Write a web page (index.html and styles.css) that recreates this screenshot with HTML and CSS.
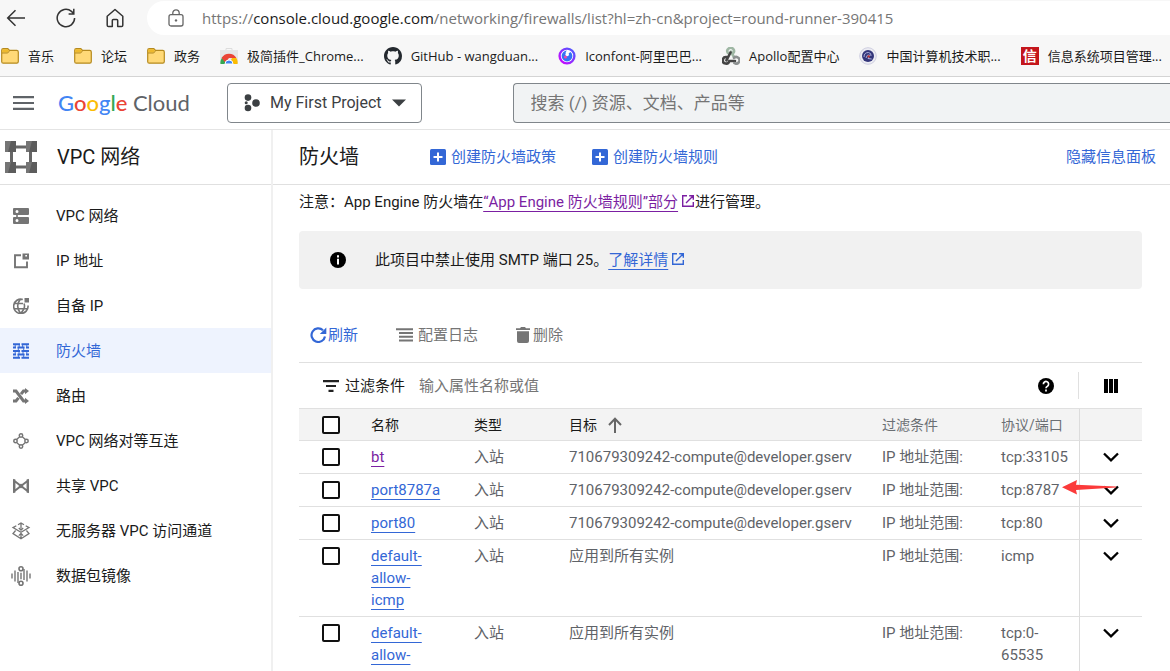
FILE: index.html
```html
<!DOCTYPE html>
<html lang="zh-CN">
<head>
<meta charset="utf-8">
<title>防火墙 – VPC 网络 – Google Cloud</title>
<link rel="stylesheet" href="styles.css">
</head>
<body>
<svg class="defs" aria-hidden="true">
  <symbol id="folder" viewBox="0 0 18 18">
    <path d="M.7 3.2Q.7 1.7 2.2 1.7H6.8L8.6 3.4H15.8Q17.3 3.4 17.3 4.9V14.6Q17.3 16.2 15.8 16.2H2.2Q.7 16.2.7 14.6Z" fill="#ffd977" stroke="#b58a1f" stroke-width="1.2"/>
    <path d="M1.2 3Q1.2 2.2 2.2 2.2H6.6L8 3.6 6.6 5.6H1.2Z" fill="#edb92e"/>
    <path d="M1 6H6.7L8.7 3.6" fill="none" stroke="#b58a1f"/>
  </symbol>
  <symbol id="external" viewBox="0 0 14 14">
    <path d="M6 1.7H1.7V12.3H12.3V8M8.2 1.7H12.3V5.8M12 2L5 9" fill="none" stroke="currentColor" stroke-width="1.4"/>
  </symbol>
  <symbol id="plus" viewBox="0 0 16 16">
    <rect width="16" height="16" rx="1.5" fill="currentColor"/>
    <path d="M8 3.5V12.5M3.5 8H12.5" stroke="#fff" stroke-width="2"/>
  </symbol>
  <symbol id="chevron" viewBox="0 0 16 10">
    <path d="M1 1.5L8 8.3 15 1.5" fill="none" stroke="#000" stroke-width="2.3"/>
  </symbol>
</svg>

<div class="browser">
  <div class="address-row">
    <button class="tool" aria-label="返回"><svg width="20" height="18" viewBox="0 0 20 18"><path d="M19 9H2M9.5 1.2L1.7 9 9.5 16.8" fill="none" stroke="#333" stroke-width="1.5"/></svg></button>
    <button class="tool" aria-label="刷新页面"><svg width="20" height="20" viewBox="0 0 20 20"><path d="M18.6 10A8.7 8.7 0 1 1 15.5 3.4L17.6 5.6M17.8 .8V6H12.6" fill="none" stroke="#333" stroke-width="1.5"/></svg></button>
    <button class="tool" aria-label="主页"><svg width="18" height="20" viewBox="0 0 18 20"><path d="M1.2 8.3L9 1.5 16.8 8.3V17.2Q16.8 18.5 15.5 18.5H11.7V12.5Q11.7 11.5 10.7 11.5H7.3Q6.3 11.5 6.3 12.5V18.5H2.5Q1.2 18.5 1.2 17.2Z" fill="none" stroke="#333" stroke-width="1.5" stroke-linejoin="round"/></svg></button>
    <div class="url">
      <svg width="16" height="18" viewBox="0 0 16 18"><rect x="1" y="5.7" width="14" height="11.3" rx="2" fill="none" stroke="#666" stroke-width="1.3"/><path d="M4.8 5.7V4A3.2 3.2 0 0 1 11.2 4V5.7" fill="none" stroke="#666" stroke-width="1.3"/><circle cx="8" cy="11.4" r="1.2" fill="#666"/></svg>
      <span>https://<b>console.cloud.google.com</b>/networking/firewalls/list?hl=zh-cn&amp;project=round-runner-390415</span>
    </div>
  </div>
  <nav class="bookmarks" aria-label="书签">
    <a href="#"><svg><use href="#folder"/></svg>音乐</a>
    <a href="#"><svg><use href="#folder"/></svg>论坛</a>
    <a href="#"><svg><use href="#folder"/></svg>政务</a>
    <a href="#"><svg viewBox="0 0 18 18"><path d="M0 3H18V17H0Z" fill="#e6e6e6"/><path d="M6 3V1.5H12V3" fill="none" stroke="#ddd"/><path d="M.5 17A8.5 8.5 0 0 1 4 8.9L9 17Z" fill="#34a853"/><path d="M1.6 11A8.5 8.5 0 0 1 16.4 11H9L5.2 15.5Z" fill="#ea4335"/><path d="M16.4 11A8.5 8.5 0 0 1 17.5 17H9L12 11Z" fill="#fbbc04"/><path d="M5 17A4 4 0 0 1 13 17Z" fill="#4285f4" stroke="#fff"/></svg>极简插件_Chrome...</a>
    <a href="#"><svg viewBox="0 0 16 16"><path fill="#24292f" d="M8 0C3.58 0 0 3.58 0 8c0 3.54 2.29 6.53 5.47 7.59.4.07.55-.17.55-.38 0-.19-.01-.82-.01-1.49-2.01.37-2.53-.49-2.69-.94-.09-.23-.48-.94-.82-1.13-.28-.15-.68-.52-.01-.53.63-.01 1.08.58 1.23.82.72 1.21 1.87.87 2.33.66.07-.52.28-.87.51-1.07-1.78-.2-3.64-.89-3.64-3.95 0-.87.31-1.59.82-2.15-.08-.2-.36-1.02.08-2.12 0 0 .67-.21 2.2.82.64-.18 1.32-.27 2-.27s1.36.09 2 .27c1.53-1.04 2.2-.82 2.2-.82.44 1.1.16 1.92.08 2.12.51.56.82 1.27.82 2.15 0 3.07-1.87 3.75-3.65 3.95.29.25.54.73.54 1.48 0 1.07-.01 1.93-.01 2.2 0 .21.15.46.55.38A8.01 8.01 0 0 0 16 8c0-4.42-3.58-8-8-8z"/></svg>GitHub - wangduan...</a>
    <a href="#"><svg viewBox="0 0 18 18"><defs><linearGradient id="ring" x1="0" y1="1" x2="1" y2="0"><stop offset="0" stop-color="#d400ff"/><stop offset="1" stop-color="#4560ff"/></linearGradient></defs><circle cx="9" cy="9" r="7.4" fill="#fff" stroke="url(#ring)" stroke-width="2.4"/><path d="M9 3.6A5.4 5.4 0 1 0 14.4 9 5.4 5.4 0 0 0 12.5 5Q9.5 8 7.5 6Q8 4.5 9 3.6Z" fill="#3474f4"/><circle cx="9.2" cy="7.4" r="1.8" fill="#fff"/><circle cx="7.5" cy="10" r="1.5" fill="#f444a8"/></svg>Iconfont-阿里巴巴...</a>
    <a href="#"><svg viewBox="0 0 18 18"><g fill="none" stroke-width="2.6" stroke-linecap="round"><path d="M5.8 5.8A3.3 3.3 0 1 1 11 6.4M8.8 4.5L12 10" stroke="#9fb7a4"/><path d="M4.3 10A3.3 3.3 0 1 0 7.3 14H13M8.5 5.5L4.4 13.3" stroke="#444"/><path d="M12 10.8A3.3 3.3 0 1 1 12.3 16" stroke="#8c9090"/></g></svg>Apollo配置中心</a>
    <a href="#"><svg viewBox="0 0 18 18"><circle cx="9" cy="9" r="8.3" fill="#ececf3" stroke="#cfcfe0"/><circle cx="9" cy="9" r="6" fill="#33367a"/><path d="M5 10Q5 5.5 9.5 5.5 12.5 6 12 9M7 11Q8 7 10.5 8L9 11.5 12.7 12" fill="none" stroke="#aeb0dc"/><circle cx="9.7" cy="9.4" r="1.2" fill="#b33"/></svg>中国计算机技术职...</a>
    <a href="#"><span class="seal">信</span>信息系统项目管理...</a>
  </nav>
</div>

<header class="topbar">
  <button class="menu" aria-label="导航菜单"><svg width="21" height="14" viewBox="0 0 21 14"><path d="M0 1.2H21M0 7H21M0 12.8H21" stroke="#5f6368" stroke-width="2.2"/></svg></button>
  <a class="logo" href="#"><span class="g-blue">G</span><span class="g-red">o</span><span class="g-yellow">o</span><span class="g-blue">g</span><span class="g-green">l</span><span class="g-red">e</span> <span class="cloud">Cloud</span></a>
  <button class="project"><svg width="16" height="18" viewBox="0 0 16 18"><g fill="#3c4043"><circle cx="4" cy="3.6" r="3.3"/><circle cx="4" cy="14" r="3.3"/><circle cx="12" cy="9" r="3.8"/><circle cx="2.2" cy="8.8" r="1.5"/></g></svg><span>My First Project</span><svg width="14" height="8" viewBox="0 0 14 8"><path d="M0 .5H14L7 7.5Z" fill="#3c4043"/></svg></button>
  <input class="search" type="search" aria-label="搜索" placeholder="搜索 (/) 资源、文档、产品等">
</header>

<div class="shell">
  <aside class="sidebar">
    <div class="product">
      <svg width="32" height="32" viewBox="0 0 32 32"><path d="M10 6H22M10 26H22M6.5 10V22M25.5 10V22" stroke="#666" stroke-width="3"/><g fill="#757575"><path d="M0 0H11V11H0ZM21 0H32V11H21ZM0 21H11V32H0ZM21 21H32V32H21Z"/></g><g fill="#5c5c5c"><path d="M6 0H11V11H3ZM27 0H32V11H24ZM6 21H11V32H3ZM27 21H32V32H24Z"/></g></svg>
      <span>VPC 网络</span>
    </div>
    <nav class="side-nav" aria-label="VPC 网络">
      <a href="#"><svg viewBox="0 0 16 16"><path fill="currentColor" fill-rule="evenodd" d="M1 0H15Q16 0 16 1V6Q16 7 15 7H1Q0 7 0 6V1Q0 0 1 0ZM1 9H15Q16 9 16 10V15Q16 16 15 16H1Q0 16 0 15V10Q0 9 1 9ZM4 2A1.5 1.5 0 1 0 4 5 1.5 1.5 0 1 0 4 2ZM4 11A1.5 1.5 0 1 0 4 14 1.5 1.5 0 1 0 4 11Z"/><path d="M3.2 5V11H4.8V5Z" fill="currentColor"/></svg>VPC 网络</a>
      <a href="#"><svg viewBox="0 0 16 16"><path d="M8 2.2H2V14.2H14V8.5" fill="none" stroke="currentColor" stroke-width="1.9"/><path fill="currentColor" fill-rule="evenodd" d="M9.5.5H16V6.5H9.5ZM12.3 2V3.4H14V2Z"/></svg>IP 地址</a>
      <a href="#"><svg viewBox="0 0 16 16"><g fill="none" stroke="currentColor" stroke-width="1.6"><path d="M9.8 1.4A7.2 7.2 0 1 0 15 7.5M7.5 1Q1.8 8 7.5 15.4 13 10 11 5.5M1.3 5.5H10M1.3 10.8H14.2"/></g><path d="M11.5 0H16V4.5H11.5Z" fill="currentColor"/></svg>自备 IP</a>
      <a href="#" class="active" aria-current="page"><svg viewBox="0 0 16 16"><path fill="none" stroke="currentColor" stroke-width="2" d="M0 1.2H7M8.5 1.2H16M0 4.6H3M4.5 4.6H11.5M13 4.6H16M0 8H7M8.5 8H16M0 11.4H3M4.5 11.4H11.5M13 11.4H16M0 14.8H7M8.5 14.8H16"/><path d="M2.2 1V5M6.2 1V5M9.6 1V5M13.8 1V5M2.2 8V11M6 8V11M10 8V11M13.8 8V11M5.3 4V8M10.7 4V8M5.3 11V15M10.7 11V15" stroke="currentColor" stroke-width=".9"/></svg>防火墙</a>
      <a href="#"><svg viewBox="0 0 16 16"><path d="M0 3H3L10.5 13H13M0 13H3L5.5 9.8M8 6.2L10.5 3H13" fill="none" stroke="currentColor" stroke-width="3"/><path d="M12 0L16 3 12 6.2ZM12 9.8L16 13 12 16Z" fill="currentColor"/></svg>路由</a>
      <a href="#"><svg viewBox="0 0 16 16"><path d="M6.7 3.8L3.6 6.6M9.3 3.8L12.4 6.6M3.6 9.4L6.7 12.2M12.4 9.4L9.3 12.2" fill="none" stroke="currentColor" stroke-width="1.3"/><g fill="none" stroke="currentColor" stroke-width="1.5"><circle cx="8" cy="2.5" r="1.7"/><circle cx="8" cy="13.5" r="1.7"/><circle cx="2.5" cy="8" r="1.7"/><circle cx="13.5" cy="8" r="1.7"/></g></svg>VPC 网络对等互连</a>
      <a href="#"><svg viewBox="0 0 16 16"><path d="M1.2 2.8L14.8 13.2V2.8L1.2 13.2Z" fill="none" stroke="currentColor" stroke-width="2"/><path d="M0 1.2H2.3V14.8H0ZM13.7 1.2H16V14.8H13.7ZM5.5 8L8 5.6 10.5 8 8 10.4Z" fill="currentColor"/></svg>共享 VPC</a>
      <a href="#"><svg class="wide" viewBox="0 0 20 20"><path d="M7 3.7L10 2 13 3.7M5.3 4.7L2 6.6 10 11.2 18 6.6 14.7 4.7M4.6 9.5L2 12.5 10 17.8 18 12.5 15.4 9.5M10 2.5V7.5M7.8 7L10 9 12.2 7M10 17.5V12.5M7.8 14.6L10 12.4 12.2 14.6" fill="none" stroke="currentColor" stroke-width="1.3"/></svg>无服务器 VPC 访问通道</a>
      <a href="#"><svg class="wide" viewBox="0 0 20 20"><path d="M1 7.5V12.5M4 4.5V15.5M7 6V17M10 6.8V13.2M13 3V14M16 4.5V15.5M19 7.5V12.5" stroke="currentColor" stroke-width="1.4"/><g fill="none" stroke="currentColor" stroke-width="1.6"><circle cx="10" cy="2.8" r="2"/><circle cx="10" cy="17.2" r="2"/></g></svg>数据包镜像</a>
    </nav>
  </aside>

  <main class="main">
    <div class="page-head">
      <h1>防火墙</h1>
      <button class="link-btn"><svg width="16" height="16"><use href="#plus"/></svg>创建防火墙政策</button>
      <button class="link-btn"><svg width="16" height="16"><use href="#plus"/></svg>创建防火墙规则</button>
      <button class="link-btn panel-toggle">隐藏信息面板</button>
    </div>
    <div class="content">
      <p class="note">注意：App Engine 防火墙在<a class="visited" href="#">“App Engine 防火墙规则”部分</a><svg class="ext visited" width="14" height="14"><use href="#external"/></svg>进行管理。</p>
      <div class="banner">
        <svg width="16" height="16" viewBox="0 0 16 16"><circle cx="8" cy="8" r="8"/><path d="M8 3.3V5.4M8 6.8V12.5" stroke="#fff" stroke-width="2"/></svg>
        <p>此项目中禁止使用 SMTP 端口 25。<a href="#">了解详情</a><svg class="ext" width="14" height="14"><use href="#external"/></svg></p>
      </div>
      <div class="actions">
        <button class="refresh"><svg width="17" height="16" viewBox="0 0 17 16"><path d="M15 9.5A6.8 6.8 0 1 1 13 3.2" fill="none" stroke="currentColor" stroke-width="2.2"/><path d="M16.3.5V7H9.8Z" fill="currentColor"/></svg>刷新</button>
        <button class="logs"><svg width="17" height="14" viewBox="0 0 17 14"><path d="M0 1.2H17M3 5H17M3 8.8H17M3 12.6H17" stroke="currentColor" stroke-width="2"/></svg>配置日志</button>
        <button class="delete"><svg width="14" height="16" viewBox="0 0 14 16"><path d="M0 1.2H4L5 0H9L10 1.2H14V3H0ZM1 4.2H13V14Q13 16 11 16H3Q1 16 1 14Z" fill="currentColor"/></svg>删除</button>
      </div>
      <div class="filter">
        <svg width="16" height="12" viewBox="0 0 16 12"><path d="M0 1.2H16M3 6H13M5.5 10.8H10.5" stroke="#222" stroke-width="2.2"/></svg>
        <label for="filter">过滤条件</label>
        <input id="filter" type="text" placeholder="输入属性名称或值">
        <button class="help" aria-label="帮助"><svg width="16" height="16" viewBox="0 0 16 16"><circle cx="8" cy="8" r="8"/><path d="M5.4 6.3A2.6 2.6 0 1 1 9.5 8.2Q8 9 8 10.3M8 11.6V13.4" fill="none" stroke="#fff" stroke-width="1.7"/></svg></button>
        <button class="columns" aria-label="列显示选项"><svg width="14" height="14" viewBox="0 0 14 14"><path d="M0 0H4V14H0ZM5 0H9V14H5ZM10 0H14V14H10Z"/></svg></button>
      </div>
      <table class="rules">
        <colgroup><col class="c-check"><col class="c-name"><col class="c-type"><col><col class="c-filter"><col class="c-port"><col class="c-more"></colgroup>
        <thead>
          <tr><th class="check"><input type="checkbox" aria-label="全选"></th><th>名称</th><th>类型</th><th>目标<svg class="sort" width="14" height="16" viewBox="0 0 14 16"><path d="M7 16V1.8M1 8L7 1.8 13 8" fill="none" stroke="#666" stroke-width="2"/></svg></th><th class="soft">过滤条件</th><th class="soft">协议/端口</th><th class="more"></th></tr>
        </thead>
        <tbody>
          <tr><td class="check"><input type="checkbox" aria-label="bt"></td><td><a class="visited" href="#">bt</a></td><td>入站</td><td class="target">710679309242-compute@developer.gserv</td><td>IP 地址范围:</td><td>tcp:33105</td><td class="more"><button aria-label="展开 bt"><svg width="16" height="10"><use href="#chevron"/></svg></button></td></tr>
          <tr><td class="check"><input type="checkbox" aria-label="port8787a"></td><td><a href="#">port8787a</a></td><td>入站</td><td class="target">710679309242-compute@developer.gserv</td><td>IP 地址范围:</td><td>tcp:8787</td><td class="more"><button aria-label="展开 port8787a"><svg width="16" height="10"><use href="#chevron"/></svg></button><svg class="pointer" width="54" height="15" viewBox="0 0 54 15"><path d="M0 7.2L15 0 14 4.8 54 6.6V7.6L14 10 15 14.5Z" fill="#fb3a3a"/></svg></td></tr>
          <tr><td class="check"><input type="checkbox" aria-label="port80"></td><td><a href="#">port80</a></td><td>入站</td><td class="target">710679309242-compute@developer.gserv</td><td>IP 地址范围:</td><td>tcp:80</td><td class="more"><button aria-label="展开 port80"><svg width="16" height="10"><use href="#chevron"/></svg></button></td></tr>
          <tr><td class="check"><input type="checkbox" aria-label="default-allow-icmp"></td><td><a href="#">default-<br>allow-<br>icmp</a></td><td>入站</td><td>应用到所有实例</td><td>IP 地址范围:</td><td>icmp</td><td class="more"><button aria-label="展开 default-allow-icmp"><svg width="16" height="10"><use href="#chevron"/></svg></button></td></tr>
          <tr><td class="check"><input type="checkbox" aria-label="default-allow-"></td><td><a href="#">default-<br>allow-</a></td><td>入站</td><td>应用到所有实例</td><td>IP 地址范围:</td><td>tcp:0-<br>65535</td><td class="more"><button aria-label="展开 default-allow-"><svg width="16" height="10"><use href="#chevron"/></svg></button></td></tr>
        </tbody>
      </table>
    </div>
  </main>
</div>
</body>
</html>
```
FILE: styles.css
```css
* { box-sizing: border-box; }

body {
  margin: 0;
  height: 100vh;
  overflow: hidden;
  display: flex;
  flex-direction: column;
  background: #fff;
  color: #1a1a1a;
  font: 15px/22px Roboto, "Noto Sans CJK SC", sans-serif;
}

button, input { font: inherit; color: inherit; margin: 0; }
button { padding: 0; border: 0; background: none; display: flex; align-items: center; }
a { color: #3367d6; text-decoration: none; }
p, h1 { margin: 0; }
svg { flex: none; }
.defs { position: absolute; width: 0; height: 0; }

/* browser chrome */
.browser {
  flex: none;
  background: #f7f7f7;
  border-bottom: 1px solid #d4d4d4;
  font-family: "Open Sans", "Noto Sans CJK SC", sans-serif;
}
.address-row { display: flex; align-items: center; height: 36px; padding-left: 6px; }
.tool { width: 50px; }
.tool:nth-child(3) { width: 41px; }
.url {
  flex: 1;
  display: flex;
  align-items: center;
  gap: 18px;
  height: 34px;
  padding-left: 21px;
  background: #fff;
  border-radius: 17px 0 0 17px;
  color: #767676;
  white-space: nowrap;
}
.url b { font-weight: 400; color: #1b1b1b; }
.bookmarks {
  display: flex;
  align-items: center;
  gap: 20px;
  height: 40px;
  padding-left: 1px;
  font-size: 13px;
  white-space: nowrap;
}
.bookmarks a { display: flex; align-items: center; gap: 9px; color: #1b1b1b; }
.bookmarks svg { width: 18px; height: 18px; }
.seal {
  width: 18px;
  height: 18px;
  background: #c4161c;
  color: #fff;
  font-size: 14px;
  font-weight: 700;
  line-height: 17px;
  text-align: center;
}

/* console header */
.topbar {
  flex: none;
  display: flex;
  align-items: center;
  height: 53px;
  padding-left: 13px;
  border-bottom: 1px solid #e4e4e4;
}
.menu { width: 45px; }
.logo { width: 169px; font: 500 22px/28px Lato, sans-serif; white-space: nowrap; }
.g-blue { color: #4285f4; }
.g-red { color: #ea4335; }
.g-yellow { color: #fbbc04; }
.g-green { color: #34a853; }
.cloud { color: #5f6368; font-weight: 400; }
.project {
  gap: 10px;
  height: 40px;
  padding: 0 15px 0 16px;
  border: 1px solid #80868b;
  border-radius: 4px;
  font-size: 16px;
  color: #3c4043;
}
.search {
  flex: 1;
  min-width: 0;
  height: 40px;
  margin-left: 91px;
  padding: 0 17px;
  border: 1px solid #80868b;
  border-right: 0;
  border-radius: 4px 0 0 4px;
  background: #f1f3f4;
  font-size: 17px;
  appearance: none;
}
::placeholder { color: #757575; opacity: 1; }

/* layout */
.shell { flex: 1; min-height: 0; display: flex; }
.sidebar { flex: none; width: 273px; border-right: 2px solid #f0f0f0; }
.product {
  display: flex;
  align-items: center;
  gap: 20px;
  height: 55px;
  padding-left: 5px;
  border-bottom: 1px solid #e0e0e0;
  font-size: 20px;
}
.side-nav { padding-top: 8px; }
.side-nav a {
  display: grid;
  grid-template-columns: 41px 1fr;
  column-gap: 15px;
  align-items: center;
  height: 45px;
  color: #1a1a1a;
}
.side-nav svg { width: 16px; height: 16px; color: #757575; justify-self: center; }
.side-nav .wide { width: 20px; height: 20px; }
.side-nav .active { background: #eef3fe; color: #3367d6; }
.side-nav .active svg { color: #3367d6; }

.main { flex: 1; min-width: 0; }
.page-head {
  display: flex;
  align-items: center;
  gap: 36px;
  height: 55px;
  padding: 0 14px 0 26px;
  border-bottom: 1px solid #e0e0e0;
}
h1 { width: 95px; font-size: 20px; font-weight: 400; }
.link-btn { gap: 5px; color: #3367d6; }
.panel-toggle { margin-left: auto; }
.content { padding: 6px 28px 0 26px; }
.note a, .banner a, .rules a { text-decoration: underline 1px; text-underline-offset: 4px; }
.visited, .rules .visited { color: #7b1fa2; }
.ext { margin-left: 3px; vertical-align: -1px; }
.banner .ext { color: #3367d6; }
.banner {
  display: flex;
  align-items: center;
  gap: 29px;
  height: 58px;
  margin-top: 18px;
  padding-left: 31px;
  border-radius: 4px;
  background: #f1f1f1;
}

.actions {
  display: flex;
  align-items: center;
  height: 74px;
  padding: 19px 0 0 11px;
  border-bottom: 1px solid #e0e0e0;
  color: #757575;
}
.actions .refresh { color: #3367d6; gap: 1px; }
.actions .logs { gap: 5px; margin-left: 38px; }
.actions .delete { gap: 3px; margin-left: 38px; }

.filter { display: flex; align-items: center; height: 45px; padding-left: 24px; }
.filter label { margin-left: 6px; }
.filter input { flex: 1; min-width: 0; margin-left: 14px; padding: 0; border: 0; background: none; }
.help { height: 27px; padding-right: 24px; border-right: 1px solid #e0e0e0; }
.columns { width: 63px; justify-content: center; }

.rules { width: 100%; table-layout: fixed; border-collapse: separate; border-spacing: 0; color: #5f6368; border-top: 1px solid #e0e0e0; }
.c-check { width: 72px; }
.c-name { width: 103px; }
.c-type { width: 95px; }
.c-filter { width: 119px; }
.c-port { width: 78px; }
.c-more { width: 63px; }
.rules th, .rules td { padding: 5px 0; border-bottom: 1px solid #e0e0e0; text-align: left; vertical-align: top; white-space: nowrap; }
.rules tbody tr:last-child td { border-bottom: 0; }
.rules th { padding-bottom: 4px; background: #f3f3f3; font-size: 14px; font-weight: 400; color: #1a1a1a; }
.rules th.soft { color: #6b6f73; }
.rules .check { padding-left: 23px; }
.rules .target { overflow: hidden; }
.rules .more { position: relative; border-left: 1px solid #dcdcdc; }
.more button { width: 100%; height: 22px; justify-content: center; }
.sort { margin-left: 11px; vertical-align: -3px; }
.pointer { position: absolute; left: -18px; top: 6px; }
.check input {
  display: block;
  appearance: none;
  width: 18px;
  height: 18px;
  margin-top: 2px;
  border: 2px solid #111;
  border-radius: 2px;
  background: #fff;
}
```
